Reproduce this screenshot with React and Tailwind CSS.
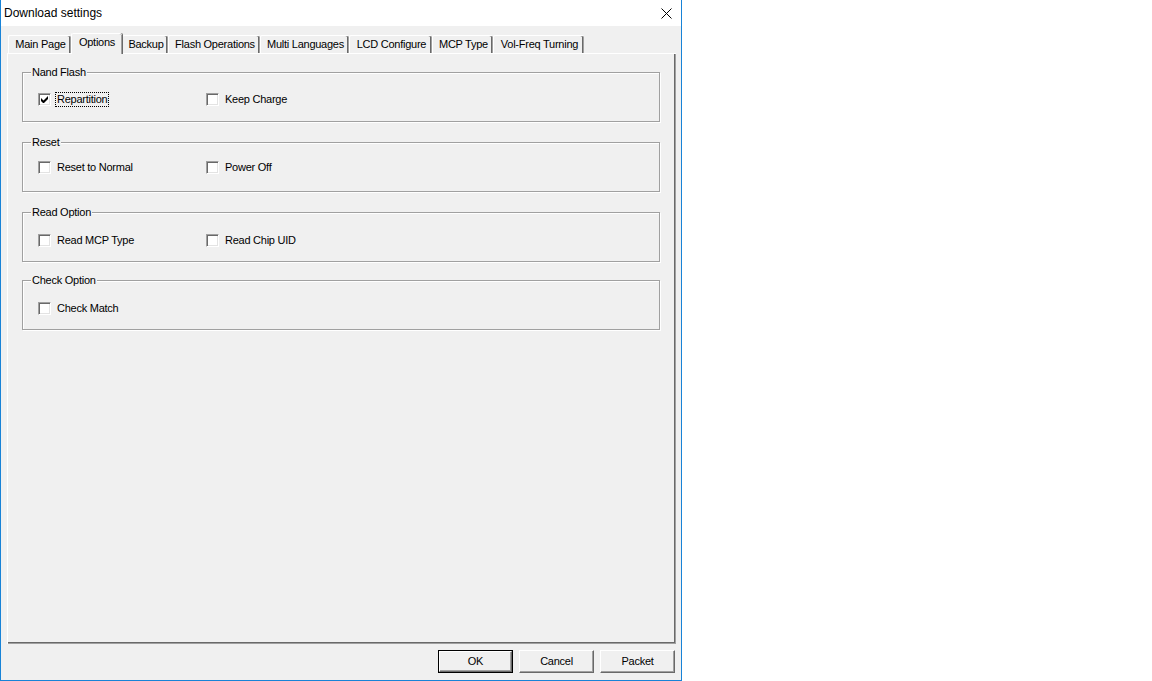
import React from "react";

const tabs = [
  { label: "Main Page", w: "w-[63px]" },
  { label: "Options", w: "w-[51px]", active: true },
  { label: "Backup", w: "w-[46px]" },
  { label: "Flash Operations", w: "w-[92px]" },
  { label: "Multi Languages", w: "w-[89px]" },
  { label: "LCD Configure", w: "w-[83px]" },
  { label: "MCP Type", w: "w-[61px]" },
  { label: "Vol-Freq Turning", w: "w-[91px]" },
];

const groups = [
  { title: "Nand Flash", pt: "pt-[19px]", mt: "mt-[18px]", items: [{ label: "Repartition", checked: true, focus: true }, { label: "Keep Charge" }] },
  { title: "Reset", pt: "pt-[17px]", mt: "mt-[20px]", items: [{ label: "Reset to Normal" }, { label: "Power Off" }] },
  { title: "Read Option", pt: "pt-[20px]", mt: "mt-[20px]", items: [{ label: "Read MCP Type" }, { label: "Read Chip UID" }] },
  { title: "Check Option", pt: "pt-[20px]", mt: "mt-[18px]", items: [{ label: "Check Match" }] },
];

const CheckBox = ({ checked }) => (
  <span className="w-[13px] h-[13px] shrink-0 flex items-center justify-center bg-white border border-t-[#a0a0a0] border-l-[#a0a0a0] border-r-white border-b-white shadow-[inset_1px_1px_0_#696969,inset_-1px_-1px_0_#e3e3e3]">
    {checked && (
      <svg width="7" height="7" viewBox="0 0 7 7">
        <path d="M0 2v3l2 2h1l4-4V0L2.5 4.5z" fill="#000" />
      </svg>
    )}
  </span>
);

const Option = ({ label, checked, focus }) => (
  <div className="w-[168px] flex items-center gap-[5px]">
    <CheckBox checked={checked} />
    <span className={`leading-[13px] px-[1px] -ml-[1px] border border-dotted ${focus ? "border-black" : "border-transparent"}`}>
      {label}
    </span>
  </div>
);

const Group = ({ title, items, pt, mt }) => (
  <div className={`relative w-[638px] h-[50px] border border-[#a0a0a0] shadow-[inset_1px_1px_0_#fff,1px_1px_0_#fff] ${mt} ${pt} pl-[15px]`}>
    <span className="absolute -top-[7px] left-[8px] px-[1px] bg-[#f0f0f0] leading-[13px]">{title}</span>
    <div className="flex">
      {items.map((it) => (
        <Option key={it.label} {...it} />
      ))}
    </div>
  </div>
);

const Button = ({ children, def }) => (
  <div className={`w-[75px] h-[23px] ${def ? "border border-black" : ""}`}>
    <button className="w-full h-full bg-[#f0f0f0] border border-t-white border-l-white border-r-[#696969] border-b-[#696969] shadow-[inset_-1px_-1px_0_#a0a0a0] flex items-center justify-center leading-none">
      {children}
    </button>
  </div>
);

export default function App() {
  return (
    <div className="w-[1152px] h-[681px] bg-white flex text-[11px] text-black font-['Liberation_Sans',Arial,sans-serif]">
      <div className="w-[682px] h-[681px] border-x border-b border-[#1883d7] bg-[#f0f0f0] flex flex-col">
        {/* Title bar */}
        <div className="h-[26px] bg-white flex items-center justify-between pl-[3px] pr-[9px]">
          <span className="text-[12px] leading-none">Download settings</span>
          <svg width="11" height="11" viewBox="0 0 11 11" className="mt-[1px]">
            <path d="M0.5 0.5l10 10M10.5 0.5l-10 10" stroke="#000" strokeWidth="1" />
          </svg>
        </div>

        <div className="flex flex-col pl-[6px] pt-[7px] tracking-[-0.25px]">
          {/* Tabs */}
          <div className="h-[20px] flex items-end ml-[1px]">
            {tabs.map((t) =>
              t.active ? (
                <div
                  key={t.label}
                  className={`${t.w} h-[21px] -mb-[1px] relative z-10 bg-[#f0f0f0] border-t border-l border-white rounded-t-[2px] shadow-[inset_-1px_0_0_#a0a0a0,1px_0_0_#696969] flex items-center justify-center pb-[3px]`}
                >
                  {t.label}
                </div>
              ) : (
                <div
                  key={t.label}
                  className={`${t.w} h-[18px] bg-[#f0f0f0] border-t border-l border-white rounded-t-[2px] shadow-[inset_-1px_0_0_#a0a0a0,inset_-2px_0_0_#696969] flex items-center justify-center pl-[1px]`}
                >
                  {t.label}
                </div>
              )
            )}
          </div>

          {/* Panel */}
          <div className="w-[669px] h-[591px] border-t border-l border-white shadow-[inset_-1px_-1px_0_#a0a0a0,inset_-2px_-2px_0_#696969] flex flex-col pl-[14px]">
            {groups.map((g) => (
              <Group key={g.title} {...g} />
            ))}
          </div>
        </div>

        {/* Buttons */}
        <div className="mt-[6px] flex justify-end gap-[6px] pr-[6px] tracking-[-0.25px]">
          <Button def>OK</Button>
          <Button>Cancel</Button>
          <Button>Packet</Button>
        </div>
      </div>
    </div>
  );
}
